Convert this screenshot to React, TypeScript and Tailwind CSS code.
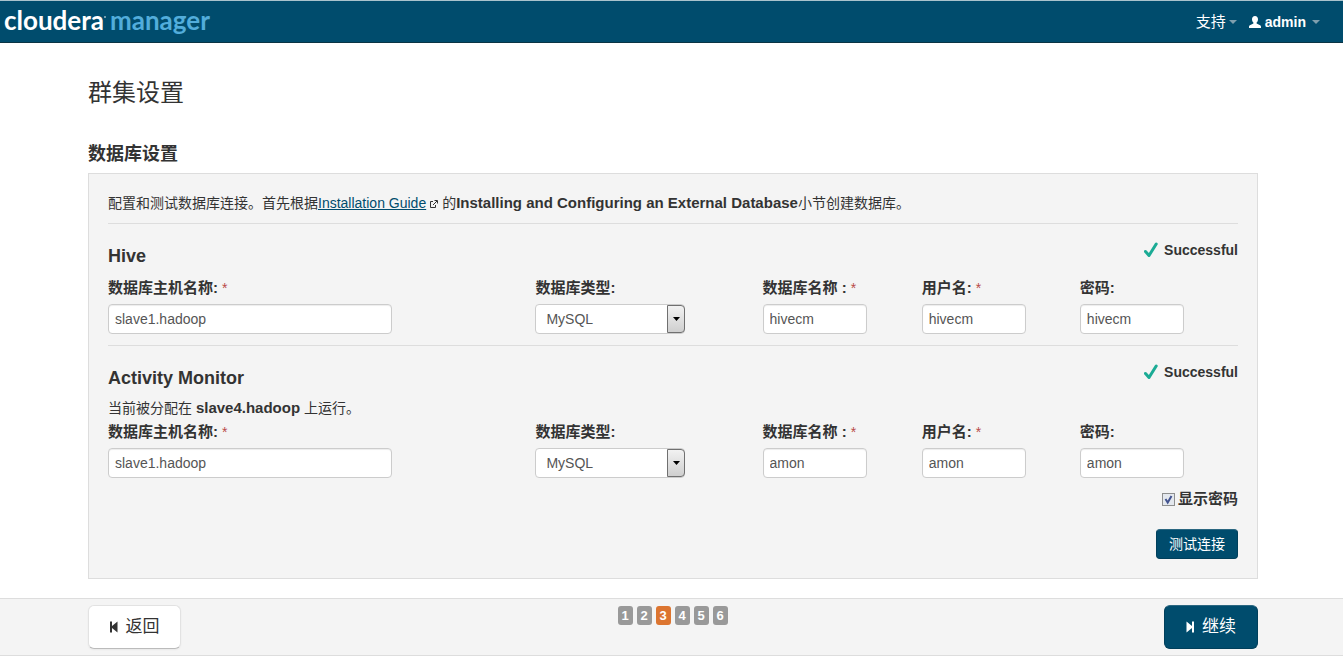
import { useState } from "react";

type Service = {
	id: string;
	name: string;
	host: string;
	database: string;
	user: string;
	password: string;
	assignedTo?: string;
};

const services: Service[] = [
	{
		id: "hive",
		name: "Hive",
		host: "slave1.hadoop",
		database: "hivecm",
		user: "hivecm",
		password: "hivecm",
	},
	{
		id: "amon",
		name: "Activity Monitor",
		host: "slave1.hadoop",
		database: "amon",
		user: "amon",
		password: "amon",
		assignedTo: "slave4.hadoop",
	},
];

const steps = [1, 2, 3, 4, 5, 6];
const currentStep = 3;

const inputClass =
	"block h-[30px] rounded border border-[#ccc] bg-white px-1.5 text-sm text-[#555] shadow-[inset_0_1px_1px_rgba(0,0,0,0.075)] outline-none focus:border-[#52a8ec]";

function Caret() {
	return (
		<svg width="8" height="4" viewBox="0 0 8 4" aria-hidden="true">
			<path d="M0 0h8L4 4z" fill="#7f9fae" />
		</svg>
	);
}

function Header() {
	return (
		<header className="flex h-[43px] items-center justify-between border-t border-b border-t-[#a9c3cd] border-b-[#0b3444] bg-[#004c6d] pr-[23px] pl-1">
			<a
				href="#home"
				className="flex gap-1 pb-1 font-['Lato'] text-[26px] leading-8 font-bold text-white"
			>
				<span className="flex">
					cloudera
					<span className="mt-3 h-0.5 w-0.5 rounded-full bg-white/60" />
				</span>
				<span className="text-[#52addb]">manager</span>
			</a>
			<nav className="flex items-center gap-3 text-[15px] leading-5 text-white">
				<button type="button" className="flex items-center gap-[3px]">
					支持
					<Caret />
				</button>
				<button
					type="button"
					className="flex items-center gap-1 text-sm font-bold"
				>
					<svg width="12" height="12" viewBox="0 0 12 12" aria-hidden="true">
						<path
							d="M6 0c1.900 0 3 1.300 3 3.200 0 1.500-.6 2.700-1.400 3.400v1l3 1.400c.9.4 1.400.9 1.400 1.700V12H0v-1.300c0-.8.5-1.300 1.400-1.700l3-1.400v-1C3.600 5.900 3 4.700 3 3.200 3 1.300 4.100 0 6 0z"
							fill="#fff"
						/>
					</svg>
					<span className="pr-0.5">admin</span>
					<Caret />
				</button>
			</nav>
		</header>
	);
}

function Field({
	id,
	label,
	value,
	required,
	width,
}: {
	id: string;
	label: string;
	value: string;
	required?: boolean;
	width: string;
}) {
	return (
		<div>
			<FieldLabel id={id} label={label} required={required} />
			<input id={id} defaultValue={value} className={`${inputClass} ${width}`} />
		</div>
	);
}

function FieldLabel({
	id,
	label,
	required,
}: {
	id: string;
	label: string;
	required?: boolean;
}) {
	return (
		<label
			htmlFor={id}
			className="mb-1.5 block text-[15px] leading-5 font-bold whitespace-nowrap"
		>
			{label}
			{required && (
				<span className="pl-1 text-sm font-normal text-[#b94a48]">*</span>
			)}
		</label>
	);
}

function ServiceSection({ service }: { service: Service }) {
	return (
		<section className="border-t border-[#ddd] pt-4">
			<div className="flex items-start justify-between">
				<h3 className="mt-1 text-lg leading-6 font-bold">{service.name}</h3>
				<p className="flex items-center gap-1.5 text-sm leading-5 font-bold">
					<svg width="14" height="16" viewBox="0 0 14 16" aria-hidden="true">
						<path
							d="M1.500 9.500l3.500 4L12.200 2"
							fill="none"
							stroke="#1bab95"
							strokeWidth="3"
							strokeLinecap="round"
							strokeLinejoin="round"
						/>
					</svg>
					Successful
				</p>
			</div>
			{service.assignedTo && (
				<p className="mt-2 -mb-1.5 text-sm leading-5">
					当前被分配在 <b className="text-[15px]">{service.assignedTo}</b>{" "}
					上运行。
				</p>
			)}
			<div className="mt-2.5 grid grid-cols-[427fr_227fr_159fr_158fr_158fr]">
				<Field
					id={`${service.id}-host`}
					label="数据库主机名称:"
					value={service.host}
					width="w-[284px]"
					required
				/>
				<div>
					<FieldLabel id={`${service.id}-type`} label="数据库类型:" />
					<div className="relative w-[150px]">
						<select
							id={`${service.id}-type`}
							className="block h-[30px] w-full appearance-none rounded border border-[#ccc] bg-white pl-2.5 text-sm text-[#555]"
						>
							<option>MySQL</option>
							<option>PostgreSQL</option>
							<option>Oracle</option>
						</select>
						<span className="pointer-events-none absolute inset-y-px right-0 flex w-[18px] items-center justify-center rounded-r-sm border border-[#707070] bg-linear-to-b from-[#f2f2f2] to-[#cfcfcf]">
							<svg width="7" height="4" viewBox="0 0 7 4" aria-hidden="true">
								<path d="M0 0h7L3.500 4z" fill="#000" />
							</svg>
						</span>
					</div>
				</div>
				<Field
					id={`${service.id}-database`}
					label="数据库名称 :"
					value={service.database}
					width="w-[104px]"
					required
				/>
				<Field
					id={`${service.id}-user`}
					label="用户名:"
					value={service.user}
					width="w-[104px]"
					required
				/>
				<Field
					id={`${service.id}-password`}
					label="密码:"
					value={service.password}
					width="w-[104px]"
				/>
			</div>
		</section>
	);
}

function Footer() {
	return (
		<footer className="mt-[19px] flex items-start justify-between border-y border-[#ddd] bg-[#f4f4f4] pt-1.5 pr-[85px] pb-1.5 pl-[88px]">
			<button
				type="button"
				className="flex h-11 w-[93px] items-center justify-center gap-2 rounded-md border border-[#e2e2e2] border-b-[#bbb] bg-white text-[17px] shadow-[0_1px_2px_rgba(0,0,0,0.05)]"
			>
				<svg width="8" height="12" viewBox="0 0 8 12" aria-hidden="true">
					<path d="M0 0.500h2v4.500l5.500-4.500v11L2 7v4.500H0z" fill="#333" />
				</svg>
				返回
			</button>
			<ol className="mt-px flex gap-1 text-[13px] leading-[19px] font-bold text-white">
				{steps.map((step) => (
					<li
						key={step}
						className={`w-[15px] rounded-[3px] text-center ${
							step === currentStep ? "bg-[#dc7530]" : "bg-[#999]"
						}`}
					>
						{step}
					</li>
				))}
			</ol>
			<button
				type="button"
				className="flex h-11 w-[94px] items-center justify-center gap-2 rounded-md border border-[#003f5b] border-t-[#2b6781] bg-[#004c6d] text-[17px] text-white"
			>
				<svg width="8" height="12" viewBox="0 0 8 12" aria-hidden="true">
					<path d="M8 0.500H6v4.500L0.500 0.500v11L6 7v4.500h2z" fill="#fff" />
				</svg>
				继续
			</button>
		</footer>
	);
}

export default function App() {
	const [showPassword, setShowPassword] = useState(true);

	return (
		<div className="bg-white font-['Liberation_Sans','Noto_Sans_CJK_SC',sans-serif] text-sm text-[#333]">
			<Header />

			<main className="pt-8 pr-[85px] pl-[88px]">
				<h1 className="text-2xl leading-9">群集设置</h1>
				<h2 className="mt-[31px] text-lg leading-6 font-bold">数据库设置</h2>

				<div className="mt-[7px] border border-[#ddd] bg-[#f4f4f4] px-[19px] pt-[19px] pb-[19px]">
					<p className="pb-2.5 leading-5">
						配置和测试数据库连接。首先根据
						<a href="#guide" className="text-[#004c6d] underline">
							Installation Guide
						</a>
						<svg
							width="8"
							height="8"
							viewBox="0 0 8 8"
							aria-hidden="true"
							className="mx-1 inline-block align-baseline"
						>
							<path
								d="M3 1.500H.5v6h5V5M3 5l4-4M4.500.5h3v3"
								fill="none"
								stroke="#333"
							/>
						</svg>
						的
						<b className="text-[15px]">
							Installing and Configuring an External Database
						</b>
						小节创建数据库。
					</p>

					<div className="flex flex-col gap-[11px]">
						{services.map((service) => (
							<ServiceSection key={service.id} service={service} />
						))}
					</div>

					<div className="mt-[11px] flex flex-col items-end gap-5">
						<label className="flex items-center gap-[3px] text-[15px] leading-5 font-bold">
							<span className="relative flex">
								<input
									type="checkbox"
									checked={showPassword}
									onChange={(e) => setShowPassword(e.target.checked)}
									className="size-[13px] appearance-none border border-[#8e8f8f] bg-[#e4e8ee]"
								/>
								{showPassword && (
									<svg
										width="13"
										height="13"
										viewBox="0 0 13 13"
										aria-hidden="true"
										className="pointer-events-none absolute inset-0"
									>
										<path
											d="M3.500 6l2.200 3.500L9.500 3"
											fill="none"
											stroke="#42538f"
											strokeWidth="2"
										/>
									</svg>
								)}
							</span>
							显示密码
						</label>
						<button
							type="button"
							className="h-[30px] rounded border border-[#003f5b] border-t-[#2b6781] bg-[#004c6d] px-[12px] text-sm text-white"
						>
							测试连接
						</button>
					</div>
				</div>
			</main>

			<Footer />
		</div>
	);
}
